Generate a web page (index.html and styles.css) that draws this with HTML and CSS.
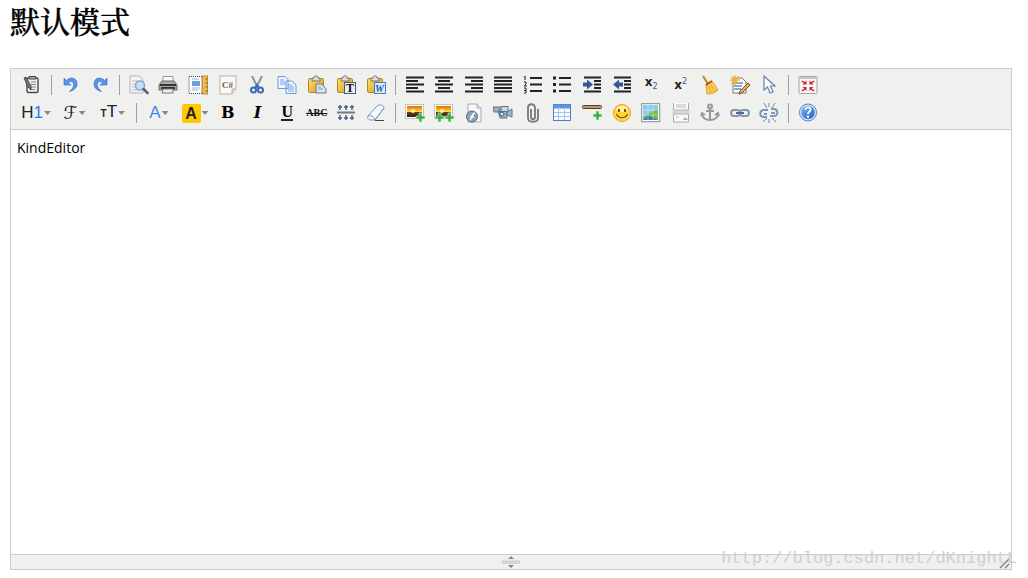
FILE: index.html
```html
<!DOCTYPE html>
<html lang="zh-CN">
<head>
<meta charset="utf-8">
<title>KindEditor</title>
<link rel="stylesheet" href="styles.css">
</head>
<body>
<svg class="defs" aria-hidden="true">
<defs>
<linearGradient id="gold" x2="1" y2="1"><stop stop-color="#ffe36b"/><stop offset="1" stop-color="#d89418"/></linearGradient>
<linearGradient id="sky" x2="0" y2="1"><stop stop-color="#e06d00"/><stop offset=".5" stop-color="#ffd84a"/><stop offset=".56" stop-color="#66411b"/><stop offset="1" stop-color="#2b221b"/></linearGradient>
<linearGradient id="blue" x2="1" y2="1"><stop stop-color="#7fb0ef"/><stop offset="1" stop-color="#255fc3"/></linearGradient>
<g id="undo"><path d="M3 3v7h7L7.500 8C10 5 13.500 7 12.500 11c-.5 2-2 3.500-4 5.500 5-1 8-4.500 7.500-8.500C15.500 2.500 9 1.500 5.500 5.500z" fill="#5c93e8" stroke="#3f75d3" stroke-width=".7"/></g>
<g id="sheet"><path d="M4 1h9l4 4v14H4z" fill="#f7f8fa" stroke="#a7abb2"/><path d="M13 1v4h4" fill="#ddd" stroke="#a7abb2"/></g>
<g id="clip"><rect x="1.500" y="3.500" width="15" height="14" rx="1.500" fill="url(#gold)" stroke="#b88624"/><path d="M5 6V3h2c0-3 4-3 4 0h2v3z" fill="#ddd" stroke="#77736a"/></g>
<g id="plus"><path d="M3 0h3v3h3v3H6v3H3V6H0V3h3z" fill="#3dae43" stroke="#e8f5e8" stroke-width=".6"/></g>
<g id="photo"><rect x=".5" y="1.500" width="18" height="14" fill="#fff" stroke="#c4c4c4"/><rect x="2" y="3" width="15" height="11" fill="url(#sky)"/><circle cx="8" cy="8" r="2" fill="#fff1a0"/></g>
<g id="link"><rect x="1" y="7" width="9" height="6" rx="3"/><rect x="10" y="7" width="9" height="6" rx="3"/></g>
</defs>
</svg>
<h1 class="title">默认模式</h1>
<main class="editor">
<div class="toolbar" role="toolbar" aria-label="编辑工具">
<div class="row">
<div class="group one">
<button type="button" aria-label="HTML代码"><svg viewBox="0 0 20 20"><rect x="5" y="3" width="11" height="14.500" rx="1.500" fill="#eee" stroke="#484848" stroke-width="1.400"/><path d="M7 3V1.500h7V4H7z" fill="#aaa" stroke="#444"/><path d="M9 7h5M9 9.500h5M9 12h5M9 14.500h4" stroke="#888"/><path d="M2 3l2-1 5 9v4l-3-3z" fill="#777" stroke="#333" stroke-width=".8"/></svg></button>
</div>
<i class="sep"></i>
<div class="group two">
<button type="button" aria-label="后退"><svg viewBox="0 0 20 20"><use href="#undo"/></svg></button>
<button type="button" aria-label="前进"><svg viewBox="0 0 20 20"><use href="#undo" transform="matrix(-1 0 0 1 20 0)"/></svg></button>
</div>
<i class="sep"></i>
<div class="group nine">
<button type="button" aria-label="预览"><svg viewBox="0 0 20 20"><path d="M1 1h9l4 4v13H1z" fill="#f4f4f4" stroke="#b5b5b5"/><path d="M3 6h7M3 9h4M3 12h3M3 15h5" stroke="#bbb"/><circle cx="11" cy="10.500" r="4.500" fill="#c9ddf5" stroke="#83a6d1" stroke-width="1.500"/><path d="M14.500 14l4 4" stroke="#55606e" stroke-width="2.500" stroke-linecap="round"/></svg></button>
<button type="button" aria-label="打印"><svg viewBox="0 0 20 20"><path d="M5 8V1.500h10V8" fill="#fff" stroke="#999"/><path d="M4 6h12l3 4v5H1v-5z" fill="#aaa" stroke="#666"/><path d="M2 10h16M3 13h14" stroke="#333" stroke-width="2"/><path d="M5 14h10v4H4z" fill="#eee" stroke="#777"/></svg></button>
<button type="button" aria-label="插入模板"><svg viewBox="0 0 20 20"><rect x="1" y="1.500" width="13" height="17" fill="#fafafa" stroke="#444" stroke-dasharray="1 1"/><rect x="4" y="6" width="8" height="5" fill="#6da0d8"/><path d="M4 13h8M4 15h6M4 4h7" stroke="#9eb9d6"/><rect x="14.500" y="1" width="5" height="18" fill="#eebb55" stroke="#c18a35"/><path d="M17.500 4h2M17.500 8h2M17.500 12h2M17.500 16h2" stroke="#84541a"/></svg></button>
<button type="button" aria-label="插入程序代码"><svg viewBox="0 0 20 20"><path d="M2 1h16v13l-4 5H2z" fill="#fafafa" stroke="#b2b2b2"/><path d="M18 14h-4v5" fill="#ddd" stroke="#b2b2b2"/><text x="4" y="13" class="code">C#</text></svg></button>
<button type="button" aria-label="剪切"><svg viewBox="0 0 20 20"><path d="M5 1l6 12M15 1L9 13" stroke="#8795a5" stroke-width="2"/><g fill="none" stroke="#386ab5" stroke-width="2"><circle cx="6.500" cy="15" r="2.500"/><circle cx="13.500" cy="15" r="2.500"/><path d="M8 13l2-3 2 3"/></g></svg></button>
<button type="button" aria-label="复制"><svg viewBox="0 0 20 20"><g fill="#edf4ff" stroke="#6c98da"><path d="M1 1.500h7l3 3v9H1zM9 6h6l4 4v8.500H9z"/></g><path d="M3 5h4M3 7h5M3 9h5M11 10h4M11 12h6M11 14h6M11 16h6" stroke="#7ca6df"/></svg></button>
<button type="button" aria-label="粘贴"><svg viewBox="0 0 20 20"><use href="#clip"/><path d="M9 9h6l4 5v4H9z" fill="#d9e4f2" stroke="#69778b"/><path d="M11 12h3M11 14h5" stroke="#889bb2"/></svg></button>
<button type="button" aria-label="粘贴为无格式文本"><svg viewBox="0 0 20 20"><use href="#clip"/><rect x="8.500" y="7.500" width="11" height="11" fill="#eee" stroke="#445c7c"/><text x="10" y="17" class="letter">T</text></svg></button>
<button type="button" aria-label="从Word粘贴"><svg viewBox="0 0 20 20"><use href="#clip"/><rect x="8.500" y="7.500" width="11" height="11" fill="#dceaff" stroke="#4380bd"/><text x="9" y="17" class="letter word">W</text></svg></button>
</div>
<i class="sep"></i>
<div class="group thirteen">
<button type="button" aria-label="左对齐"><svg viewBox="0 0 20 20" class="ink"><path d="M1 2.500h18M1 6h12M1 9.500h18M1 13h12M1 16.500h18"/></svg></button>
<button type="button" aria-label="居中"><svg viewBox="0 0 20 20" class="ink"><path d="M1 2.500h18M4 6h12M1 9.500h18M4 13h12M1 16.500h18"/></svg></button>
<button type="button" aria-label="右对齐"><svg viewBox="0 0 20 20" class="ink"><path d="M1 2.500h18M7 6h12M1 9.500h18M7 13h12M1 16.500h18"/></svg></button>
<button type="button" aria-label="两端对齐"><svg viewBox="0 0 20 20" class="ink"><path d="M1 2.500h18M1 6h18M1 9.500h18M1 13h18M1 16.500h18"/></svg></button>
<button type="button" aria-label="编号"><svg viewBox="0 0 20 20" class="ink"><path d="M7 3h12M7 9.500h12M7 16h12"/><path d="M1 2l1-1v4M1 7h2v2l-2 2h3M1 13h2v5H1M1 15.500h2" class="thin"/></svg></button>
<button type="button" aria-label="项目符号"><svg viewBox="0 0 20 20" class="ink"><path d="M7 3h12M7 9.500h12M7 16h12"/><path d="M1 3h3M1 9.500h3M1 16h3" class="thick"/></svg></button>
<button type="button" aria-label="增加缩进"><svg viewBox="0 0 20 20" class="ink"><path d="M2 2.500h17M12 6h7M12 9.500h7M12 13h7M2 16.500h17"/><path d="M1 7.500h4v-3l6 5-6 5v-3H1z" fill="#37569a" stroke="none"/></svg></button>
<button type="button" aria-label="减少缩进"><svg viewBox="0 0 20 20" class="ink"><path d="M2 2.500h17M12 6h7M12 9.500h7M12 13h7M2 16.500h17"/><path d="M11 7.500H7v-3l-6 5 6 5v-3h4z" fill="#37569a" stroke="none"/></svg></button>
<button type="button" aria-label="下标"><span class="script">x<sub>2</sub></span></button>
<button type="button" aria-label="上标"><span class="script up">x<sup>2</sup></span></button>
<button type="button" aria-label="清理HTML代码"><svg viewBox="0 0 20 20"><path d="M3 1l5 8" stroke="#c88525" stroke-width="2"/><path d="M6 9l6-3 6 9c-3 3-7 4-11 4z" fill="#f7cf4e" stroke="#d7a32c"/><path d="M9 11l2 7M11 10l4 7" stroke="#d9a52f"/><path d="M6 10l6-4" stroke="#b6402e" stroke-width="1.600"/></svg></button>
<button type="button" aria-label="一键排版"><svg viewBox="0 0 20 20"><path d="M3 3h9l4 4v11H3z" fill="#fff" stroke="#8c7655"/><path d="M4 8h9M4 11h8M4 14h7" stroke="#6688c0" stroke-width="1.500"/><path d="M5 0v10M0 5h10M1.500 1.500l7 7M8.500 1.500l-7 7" stroke="#f0b52e" stroke-width="1.300"/><path d="M10 16l8-8 2 2-8 8-3 1z" fill="#eba951" stroke="#76513a"/></svg></button>
<button type="button" aria-label="全选"><svg viewBox="0 0 20 20"><path d="M5 1v14l3.500-3 2.500 6 3-1-2.500-6H16z" fill="#f8fbff" stroke="#6484ae" stroke-width="1.200"/></svg></button>
</div>
<i class="sep"></i>
<div class="group one">
<button type="button" aria-label="全屏显示"><svg viewBox="0 0 20 20"><rect x="1" y="1.500" width="18" height="17" rx="1" fill="#f5f5f5" stroke="#a5a5a5"/><path d="M1 3h18" stroke="#c8c8c8" stroke-width="2"/><path d="M8.500 5.500v4h-4zM11.500 5.500v4h4zM8.500 16v-4h-4zM11.500 16v-4h4z" fill="#d02430"/><path d="M4 6l3 2M16 6l-3 2M4 16l3-2M16 16l-3-2" stroke="#bf1e2b" stroke-width="1.500"/></svg></button>
</div>
</div>
<div class="row">
<div class="group menus">
<button type="button" aria-label="段落"><span class="heading">H<b>1</b></span><i class="caret"></i></button>
<button type="button" aria-label="字体"><span class="family">ℱ</span><i class="caret"></i></button>
<button type="button" aria-label="文字大小"><span class="heading"><small>T</small>T</span><i class="caret"></i></button>
</div>
<i class="sep"></i>
<div class="group colors">
<button type="button" aria-label="文字颜色"><span class="fore">A</span><i class="caret"></i></button>
<button type="button" aria-label="文字背景"><span class="back">A</span><i class="caret"></i></button>
</div>
<div class="group six">
<button type="button" aria-label="粗体"><b class="serif">B</b></button>
<button type="button" aria-label="斜体"><b class="serif italic">I</b></button>
<button type="button" aria-label="下划线"><b class="serif under">U</b></button>
<button type="button" aria-label="删除线"><s class="strike">ABC</s></button>
<button type="button" aria-label="行距"><svg viewBox="0 0 20 20"><path d="M1 9.500h18" stroke="#777" stroke-width="2"/><path d="M4 2v5M10 2v5M16 2v5M4 12v5M10 12v5M16 12v5M2 4h4M8 4h4M14 4h4M2 15h4M8 15h4M14 15h4" stroke="#3f5f88" stroke-width="1.400"/></svg></button>
<button type="button" aria-label="删除格式"><svg viewBox="0 0 20 20"><path d="M2 13L11 3c2-2 7-1 7 2l-9 12H4c-2-1-3-2-2-4z" fill="#f7faff" stroke="#7b94b6"/><path d="M2 13c2-1 6 0 7 4l9-12" fill="none" stroke="#7b94b6"/><path d="M9 17.500h9" stroke="#444"/></svg></button>
</div>
<i class="sep"></i>
<div class="group thirteen">
<button type="button" aria-label="图片"><svg viewBox="0 0 20 20"><use href="#photo"/><use href="#plus" x="11" y="10"/></svg></button>
<button type="button" aria-label="批量图片上传"><svg viewBox="0 0 20 20"><use href="#photo"/><use href="#plus" x="1" y="10"/><use href="#plus" x="11" y="10"/></svg></button>
<button type="button" aria-label="Flash"><svg viewBox="0 0 20 20"><use href="#sheet"/><circle cx="8" cy="13.500" r="5.500" fill="#8ea4ba" stroke="#516a83"/><path d="M6 17c2-1 1-6 5-7M6 14h4" fill="none" stroke="#fff" stroke-width="1.500"/></svg></button>
<button type="button" aria-label="视音频"><svg viewBox="0 0 20 20"><path d="M0 4h7v5H1zM5 8h9v7H7z" fill="#9ab0c6" stroke="#60758e"/><rect x="8" y="3.500" width="7" height="5" fill="#ccd7e2" stroke="#61748b"/><path d="M14 9l5-3v8l-5-2z" fill="#9bb7d2" stroke="#60758e"/><circle cx="9" cy="11" r="2" fill="#dce6ef" stroke="#405c7b"/></svg></button>
<button type="button" aria-label="插入文件"><svg viewBox="0 0 20 20"><path d="M8 6v8c0 3 4 3 4 0V5c0-5-7-5-7 0v10c0 5 10 5 10 0V6" fill="none" stroke="#777" stroke-width="1.800"/></svg></button>
<button type="button" aria-label="表格"><svg viewBox="0 0 20 20"><rect x="1.500" y="1.500" width="17" height="16" fill="#f7fbff" stroke="#4b7fc6"/><path d="M2 3.500h16" stroke="#5d94dc" stroke-width="4"/><path d="M2 9.500h16M2 13.500h16M6.500 4v13M12.500 4v13" stroke="#a7c3e8"/></svg></button>
<button type="button" aria-label="插入横线"><svg viewBox="0 0 20 20"><rect x=".5" y="2.500" width="19" height="3" rx="1" fill="#b99972" stroke="#5b4029"/><use href="#plus" x="11" y="8"/></svg></button>
<button type="button" aria-label="插入表情"><svg viewBox="0 0 20 20"><circle cx="10" cy="10" r="8.500" fill="#ffd43e" stroke="#eda51c"/><ellipse cx="10" cy="6" rx="6" ry="3" fill="#fff0a0"/><path d="M7 6v3M13 6v3" stroke="#6b4515" stroke-width="1.800"/><path d="M4.500 11c2 5 9 5 11 0" fill="none" stroke="#754b19" stroke-width="1.200"/></svg></button>
<button type="button" aria-label="Google地图"><svg viewBox="0 0 20 20"><rect x=".7" y=".7" width="18" height="18" fill="#fff" stroke="#888"/><path d="M2 2h15v15H2z" fill="#8bcbed"/><path d="M2 14c4 0 4-5 8-4 2-3 4-4 7-3v10H2z" fill="#7bbc49"/><path d="M2 17l5-5 10 5z" fill="#3c7ac0"/><path d="M7 2v15M12 2v15M2 7h15M2 12h15" stroke="#fff" stroke-width=".4"/></svg></button>
<button type="button" aria-label="插入分页符"><svg viewBox="0 0 20 20"><path d="M2.500 0v7h15V0M2.500 19v-8h15v8z" fill="#fafafa" stroke="#aaa"/><path d="M5 2h10M5 4h10M1 9h18M5 14h3" stroke="#bbb"/><path d="M14 14l3 3h-5z" fill="#aaa"/></svg></button>
<button type="button" aria-label="锚点"><svg viewBox="0 0 20 20"><g fill="none" stroke="#929aa2" stroke-width="2"><circle cx="10" cy="3.500" r="2"/><path d="M10 6v12M6 8h8M2 11c0 8 16 8 16 0M1 13l1-3 3 2M15 12l3-2 1 3"/></g></svg></button>
<button type="button" aria-label="超级链接"><svg viewBox="0 0 20 20"><g fill="none" stroke="#8398b3" stroke-width="2"><use href="#link"/><path d="M6 10h8" stroke="#526a86"/></g></svg></button>
<button type="button" aria-label="取消超级链接"><svg viewBox="0 0 20 20"><g fill="none" stroke="#7e97b5" stroke-width="2"><path d="M9 7H5c-5 0-5 7 0 7h3M11 13h4c5 0 4-7 0-7h-3M5 11h3M12 10h4"/></g><path d="M5 0l3 5M10 0v4M16 0l-3 5M4 19l4-4M10 16v4M13 15l4 4" stroke="#71889e"/></svg></button>
</div>
<i class="sep"></i>
<div class="group one">
<button type="button" aria-label="关于"><svg viewBox="0 0 20 20"><circle cx="10" cy="9.500" r="8.500" fill="#d8e8ff" stroke="#4c80c9"/><circle cx="10" cy="9.500" r="6.800" fill="url(#blue)"/><path d="M7.500 7c0-4 6-3 5 0-.5 2-2.500 1.500-2.500 4M10 12.500V15" fill="none" stroke="#fff" stroke-width="1.800"/></svg></button>
</div>
</div>
</div>
<textarea class="content" aria-label="编辑内容" spellcheck="false">KindEditor</textarea>
<footer class="status">
<svg class="grip" viewBox="0 0 20 14"><path d="M7 4l3-3 3 3zM7 10l3 3 3-3z" fill="#888"/><rect x="1" y="5" width="18" height="4" rx="1" fill="#d3d3d3"/><path d="M2 5h16" stroke="#eee"/></svg>
<svg class="corner" viewBox="0 0 12 12"><path d="M1 11L10 2M6 11l4-4" stroke="#777" stroke-width="1.200"/></svg>
</footer>
<span class="watermark">http://blog.csdn.net/dKnightL</span>
</main>
</body>
</html>
```
FILE: styles.css
```css
* { box-sizing: border-box; }
body { margin: 0; padding: 0 16px 8px 10px; background: #fff; color: #000; font-family: "Liberation Sans", "Noto Sans CJK SC", sans-serif; }
.defs { position: absolute; width: 0; height: 0; }
.title { margin: 0 0 28px; font: 500 30px/40px "Noto Serif CJK SC", serif; -webkit-text-stroke: 0.4px #000; }
.editor { position: relative; display: flex; flex-direction: column; border: 1px solid #ccc; }
.toolbar { padding: 2px 6px; background: #f0f0ee; border-bottom: 1px solid #ccc; }
.row { display: flex; height: 28px; align-items: center; }
.group { display: grid; grid-auto-flow: column; grid-auto-columns: 1fr; flex: none; }
.one { width: 30px; }
.two { width: 59px; }
.nine { width: 267px; }
.thirteen { width: 384px; }
.menus { width: 115px; }
.colors { width: 72px; }
.six { width: 178px; }
.sep { flex: none; width: 1px; height: 20px; margin: 0 4px; background: #a0a0a0; }
button { display: flex; align-items: center; justify-content: center; gap: 1px; min-width: 0; height: 28px; padding: 0; border: 0; background: none; color: #222; font: inherit; line-height: 20px; }
button svg { width: 20px; height: 20px; }
.ink { fill: none; stroke: #222; stroke-width: 2; }
.thin { stroke-width: 1; }
.thick { stroke-width: 3; }
.code { font: bold 9px "Liberation Serif", serif; fill: #86532f; }
.letter { font: bold 12px "Liberation Serif", serif; fill: #111; }
.word { font-size: 10px; font-style: italic; fill: #225aa8; }
.script { font: bold 12px/16px "DejaVu Sans", sans-serif; padding-bottom: 4px; }
.up { padding: 0; }
.script sub, .script sup { color: #3a5a9c; font-size: 8px; line-height: 8px; font-weight: 400; }
.heading { font-size: 17px; }
.heading b { color: #3077ee; font-weight: 400; }
.heading small { font-size: 10px; font-weight: 700; }
.family { font: 18px/20px "DejaVu Serif", "DejaVu Sans", serif; }
.caret { width: 7px; height: 4px; background: #888; clip-path: polygon(0 0, 100% 0, 50% 100%); }
.fore { color: #4285ed; font-size: 17px; }
.back { width: 19px; height: 19px; border-radius: 2px; background: #ffc900; font-size: 16px; font-weight: 700; line-height: 19px; text-align: center; }
.serif { font: 700 16px/18px "DejaVu Serif", serif; color: #000; }
.italic { font-style: italic; }
.under { font: 700 16px/14px "Liberation Serif", serif; border-bottom: 2px solid #222; }
.strike { font: 700 10px/20px "Liberation Serif", serif; color: #111; }
.content { display: block; width: 100%; height: 424px; padding: 8px 6px; border: 0; outline: 0; resize: none; background: #fff; color: #000; font: 14px/20px "Open Sans", sans-serif; }
.status { display: flex; position: relative; align-items: center; justify-content: center; height: 15px; border-top: 1px solid #ccc; background: #f0f0ee; }
.grip { width: 20px; height: 14px; }
.corner { position: absolute; right: 0; bottom: 0; width: 12px; height: 12px; }
.watermark { position: absolute; right: -6px; bottom: 0; color: #d0d0c8; font: 17px/20px "Liberation Mono", monospace; pointer-events: none; }
```
